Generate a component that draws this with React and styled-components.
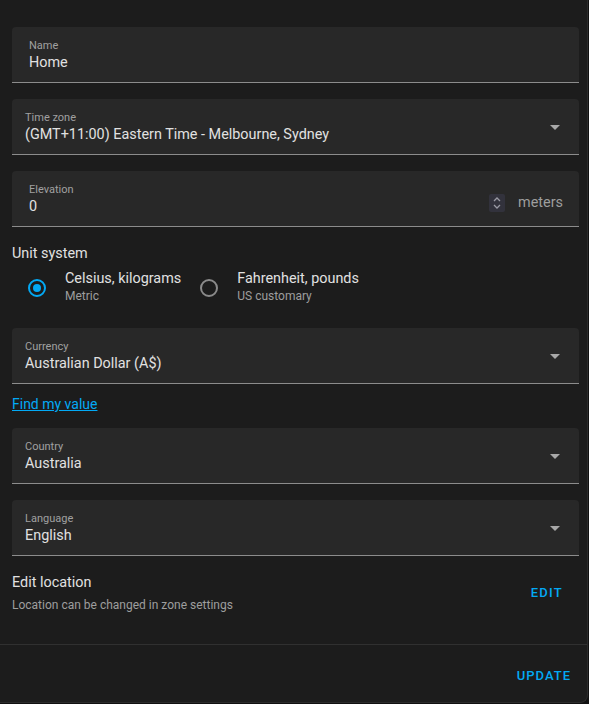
import React from 'react'
import styled, { createGlobalStyle } from 'styled-components'

const GlobalStyle = createGlobalStyle`
  html, body {
    margin: 0;
    padding: 0;
    background: #111111;
    font-family: Roboto, "Noto Sans", "Liberation Sans", sans-serif;
    -webkit-font-smoothing: antialiased;
  }
`

const Card = styled.div`
  width: 588px;
  height: 703px;
  background: #1c1c1c;
  border-right: 1px solid #2b2b2b;
  border-bottom: 1px solid #2b2b2b;
  border-bottom-right-radius: 8px;
  display: flex;
  flex-direction: column;
  box-sizing: border-box;
`

const Content = styled.div`
  padding: 27px 8px 0 12px;
  display: flex;
  flex-direction: column;
  flex: 1;
`

const Field = styled.div`
  height: 56px;
  box-sizing: border-box;
  background: #282828;
  border-radius: 4px 4px 0 0;
  border-bottom: 1px solid #8c8c8c;
  display: flex;
  align-items: center;
  padding: 0 ${(p) => (p.$select ? '19px 0 13px' : '16px 0 17px')};
  margin-bottom: ${(p) => p.$mb ?? 16}px;
`

const FieldText = styled.div`
  flex: 1;
  display: flex;
  flex-direction: column;
  padding-top: 2px;
`

const Label = styled.div`
  font-size: 11px;
  line-height: 14px;
  color: #a0a0a0;
`

const Value = styled.div`
  font-size: 14.4px;
  line-height: 18px;
  margin-top: 1px;
  color: #e1e1e1;
`

const Arrow = styled.div`
  width: 0;
  height: 0;
  border-left: 5px solid transparent;
  border-right: 5px solid transparent;
  border-top: 5px solid #a8a8a8;
  margin-top: 2px;
`

const Spinner = styled.div`
  width: 16px;
  height: 18px;
  background: #32323c;
  border-radius: 2px;
  display: flex;
  align-items: center;
  justify-content: center;
  margin-right: 13px;
  margin-top: 8px;
`

const Suffix = styled.div`
  font-size: 14.4px;
  color: #9e9e9e;
  margin-top: 8px;
`

const SectionTitle = styled.div`
  font-size: 14.4px;
  color: #e1e1e1;
  margin-top: 1px;
  line-height: 20px;
`

const RadioGroup = styled.div`
  display: flex;
  gap: 8px;
  margin: 4px 0 20px 5px;
`

const RadioOption = styled.label`
  display: flex;
  align-items: center;
  gap: 8px;
`

const RadioBox = styled.div`
  width: 40px;
  height: 40px;
  display: flex;
  align-items: center;
  justify-content: center;
`

const RadioCircle = styled.div`
  width: 18px;
  height: 18px;
  box-sizing: border-box;
  border-radius: 50%;
  border: 2px solid ${(p) => (p.$checked ? '#03a9f4' : '#8a8a8a')};
  display: flex;
  align-items: center;
  justify-content: center;
  &::after {
    content: '';
    display: ${(p) => (p.$checked ? 'block' : 'none')};
    width: 8px;
    height: 8px;
    border-radius: 50%;
    background: #03a9f4;
  }
`

const RadioText = styled.div`
  display: flex;
  flex-direction: column;
  margin-top: -2px;
`

const RadioTitle = styled.div`
  font-size: 14.4px;
  line-height: 18px;
  color: #e1e1e1;
`

const RadioSub = styled.div`
  font-size: 12px;
  line-height: 16px;
  color: #9e9e9e;
`

const Link = styled.a`
  font-size: 14px;
  color: #03a9f4;
  text-decoration: underline;
  line-height: 20px;
  margin: 0 0 14px 0;
  align-self: flex-start;
  cursor: pointer;
`

const Row = styled.div`
  display: flex;
  align-items: center;
  justify-content: space-between;
  margin-top: 9px;
`

const RowText = styled.div`
  display: flex;
  flex-direction: column;
`

const RowTitle = styled.div`
  font-size: 14.4px;
  line-height: 20px;
  color: #e1e1e1;
`

const RowSub = styled.div`
  font-size: 12px;
  line-height: 16px;
  margin-top: 4px;
  color: #9e9e9e;
`

const TextButton = styled.button`
  background: none;
  border: none;
  font-family: inherit;
  font-size: 13px;
  font-weight: 500;
  letter-spacing: ${(p) => p.$ls ?? 1.25}px;
  color: #03a9f4;
  padding: 8px ${(p) => p.$pr ?? 8}px 8px 8px;
  margin-top: ${(p) => p.$mt ?? 0}px;
  cursor: pointer;
`

const Footer = styled.div`
  border-top: 1px solid #303030;
  height: 58px;
  box-sizing: border-box;
  display: flex;
  align-items: center;
  justify-content: flex-end;
  padding-right: 8px;
  padding-top: 3px;
`

const Field2 = ({ label, value, select, mb, children }) => (
  <Field $select={select} $mb={mb}>
    <FieldText>
      <Label>{label}</Label>
      <Value>{value}</Value>
    </FieldText>
    {select && <Arrow />}
    {children}
  </Field>
)

export default function App() {
  return (
    <>
      <GlobalStyle />
      <Card>
        <Content>
          <Field2 label="Name" value="Home" />
          <Field2 label="Time zone" value="(GMT+11:00) Eastern Time - Melbourne, Sydney" select />
          <Field2 label="Elevation" value="0">
            <Spinner>
              <svg width="10" height="14" viewBox="0 0 10 14" fill="none" stroke="#9a9aa4" strokeWidth="1.3">
                <path d="M2 5 L5 2 L8 5" />
                <path d="M2 9 L5 12 L8 9" />
              </svg>
            </Spinner>
            <Suffix>meters</Suffix>
          </Field2>
          <SectionTitle>Unit system</SectionTitle>
          <RadioGroup>
            <RadioOption>
              <RadioBox><RadioCircle $checked /></RadioBox>
              <RadioText>
                <RadioTitle>Celsius, kilograms</RadioTitle>
                <RadioSub>Metric</RadioSub>
              </RadioText>
            </RadioOption>
            <RadioOption>
              <RadioBox><RadioCircle /></RadioBox>
              <RadioText>
                <RadioTitle>Fahrenheit, pounds</RadioTitle>
                <RadioSub>US customary</RadioSub>
              </RadioText>
            </RadioOption>
          </RadioGroup>
          <Field2 label="Currency" value="Australian Dollar (A$)" select mb={10} />
          <Link>Find my value</Link>
          <Field2 label="Country" value="Australia" select />
          <Field2 label="Language" value="English" select mb={8} />
          <Row>
            <RowText>
              <RowTitle>Edit location</RowTitle>
              <RowSub>Location can be changed in zone settings</RowSub>
            </RowText>
            <TextButton $pr={16} $mt={-1}>EDIT</TextButton>
          </Row>
        </Content>
        <Footer>
          <TextButton $ls={1}>UPDATE</TextButton>
        </Footer>
      </Card>
    </>
  )
}
